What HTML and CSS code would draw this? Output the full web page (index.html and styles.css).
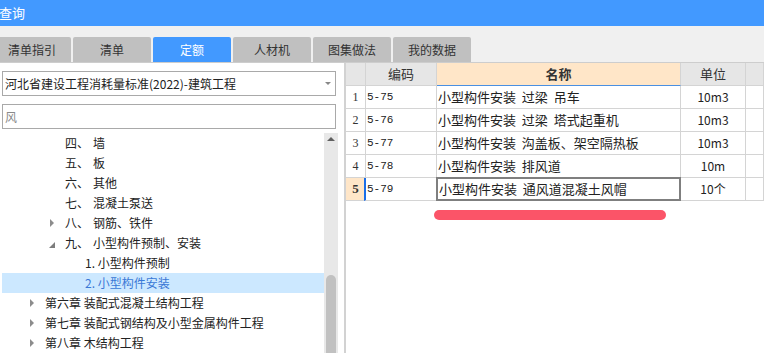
FILE: index.html
```html
<!DOCTYPE html>
<html lang="zh-CN">
<head>
    <meta charset="UTF-8">
    <meta name="viewport" content="width=device-width, initial-scale=1.0">
    <title>查询</title>
    <link rel="stylesheet" href="styles.css">
</head>
<body>
    <div class="window">
        <div class="titlebar"><span class="title">查询</span></div>

        <div class="tabs">
            <div class="tab">清单指引</div>
            <div class="tab">清单</div>
            <div class="tab active">定额</div>
            <div class="tab">人材机</div>
            <div class="tab">图集做法</div>
            <div class="tab">我的数据</div>
        </div>

        <div class="main">
            <div class="left">
                <div class="select">
                    <span>河北省建设工程消耗量标准(2022)-建筑工程</span>
                    <span class="caret"></span>
                </div>
                <div class="search">风</div>

                <div class="tree-wrap">
                    <ul class="tree">
                        <li class="node lv2"><span class="arrow"></span><span class="no">四、</span>墙</li>
                        <li class="node lv2"><span class="arrow"></span><span class="no">五、</span>板</li>
                        <li class="node lv2"><span class="arrow"></span><span class="no">六、</span>其他</li>
                        <li class="node lv2"><span class="arrow"></span><span class="no">七、</span>混凝土泵送</li>
                        <li class="node lv2"><span class="arrow closed"></span><span class="no">八、</span>钢筋、铁件</li>
                        <li class="node lv2"><span class="arrow open"></span><span class="no">九、</span>小型构件预制、安装</li>
                        <li class="node lv3"><span class="arrow"></span>1. 小型构件预制</li>
                        <li class="node lv3 selected"><span class="arrow"></span>2. 小型构件安装</li>
                        <li class="node lv1"><span class="arrow closed"></span>第六章 装配式混凝土结构工程</li>
                        <li class="node lv1"><span class="arrow closed"></span>第七章 装配式钢结构及小型金属构件工程</li>
                        <li class="node lv1"><span class="arrow closed"></span>第八章 木结构工程</li>
                    </ul>
                    <div class="scrollbar">
                        <span class="up"></span>
                        <div class="thumb"></div>
                    </div>
                </div>
            </div>

            <div class="right">
                <div class="grid">
                    <div class="cell head"></div>
                    <div class="cell head">编码</div>
                    <div class="cell head name-head">名称</div>
                    <div class="cell head">单位</div>
                    <div class="cell head"></div>

                    <div class="cell num">1</div>
                    <div class="cell code">5-75</div>
                    <div class="cell name">小型构件安装  过梁  吊车</div>
                    <div class="cell unit">10m3</div>
                    <div class="cell"></div>

                    <div class="cell num">2</div>
                    <div class="cell code">5-76</div>
                    <div class="cell name">小型构件安装  过梁  塔式起重机</div>
                    <div class="cell unit">10m3</div>
                    <div class="cell"></div>

                    <div class="cell num">3</div>
                    <div class="cell code">5-77</div>
                    <div class="cell name">小型构件安装  沟盖板、架空隔热板</div>
                    <div class="cell unit">10m3</div>
                    <div class="cell"></div>

                    <div class="cell num">4</div>
                    <div class="cell code">5-78</div>
                    <div class="cell name">小型构件安装  排风道</div>
                    <div class="cell unit">10m</div>
                    <div class="cell"></div>

                    <div class="cell num current">5</div>
                    <div class="cell code current-code">5-79</div>
                    <div class="cell name focus">小型构件安装  通风道混凝土风帽</div>
                    <div class="cell unit">10个</div>
                    <div class="cell"></div>
                </div>
                <div class="mark"></div>
            </div>
        </div>
    </div>
</body>
</html>
```

FILE: styles.css
```css
html, body {
    margin: 0;
    padding: 0;
    width: 764px;
    height: 353px;
    overflow: hidden;
    background: #fff;
    font-family: "Noto Sans CJK SC", "Noto Sans", sans-serif;
    color: #222;
}
.window {
    margin-left: -7px;
    width: 771px;
    height: 353px;
    display: flex;
    flex-direction: column;
}
.titlebar {
    height: 26px;
    background: #4299ff;
    color: #fff;
    font-size: 13px;
    line-height: 26px;
    padding-left: 6px;
}
.tabs {
    display: flex;
    gap: 2px;
    height: 25px;
    padding-top: 11px;
    background: #f0f0f0;
    border-bottom: 1px solid #cdcdcd;
}
.tab {
    width: 78px;
    height: 25px;
    line-height: 25px;
    text-align: center;
    font-size: 12px;
    color: #333;
    background: #c0c0c0;
    border-radius: 2px 2px 0 0;
}
.tab.active {
    background: #4299ff;
    color: #fff;
}
.main {
    flex: 1;
    display: flex;
    min-height: 0;
}
.left {
    width: 336px;
    padding: 8px 6px 0 9px;
    display: flex;
    flex-direction: column;
    border-right: 2px solid #d2d2d2;
}
.select, .search {
    width: 334px;
    height: 25px;
    box-sizing: border-box;
    border: 1px solid #a9a9a9;
    font-size: 12px;
    line-height: 23px;
    padding-left: 2px;
}
.select {
    display: flex;
    justify-content: space-between;
    align-items: center;
    margin-bottom: 8px;
}
.caret {
    width: 0;
    height: 0;
    margin-right: 4px;
    border-top: 3px solid #888;
    border-left: 3px solid transparent;
    border-right: 3px solid transparent;
}
.search {
    color: #8a8a8a;
}
.tree-wrap {
    flex: 1;
    display: flex;
    margin-top: 4px;
    min-height: 0;
    overflow: hidden;
}
.tree {
    flex: 1;
    list-style: none;
    margin: 0;
    padding: 0;
}
.node {
    height: 20px;
    line-height: 20px;
    font-size: 12px;
    display: flex;
    align-items: center;
    white-space: nowrap;
}
.node.lv1 { padding-left: 25px; }
.node.lv2 { padding-left: 45px; }
.node.lv3 { padding-left: 65px; }
.node.selected {
    background: #cce8ff;
    color: #3a78d6;
}
.arrow {
    width: 18px;
    height: 20px;
    display: flex;
    align-items: center;
}
.arrow.closed::before {
    content: "";
    margin-left: 3px;
    border-left: 4px solid #8c8c8c;
    border-top: 4px solid transparent;
    border-bottom: 4px solid transparent;
}
.arrow.open::before {
    content: "";
    margin-left: 2px;
    margin-top: 3px;
    border-bottom: 6px solid #7d7d7d;
    border-left: 6px solid transparent;
}
.no {
    margin-right: 4px;
}
.scrollbar {
    width: 14px;
    background: #e8e8e8;
    display: flex;
    flex-direction: column;
    align-items: center;
}
.up {
    margin-top: 4px;
    border-bottom: 4px solid #606060;
    border-left: 4px solid transparent;
    border-right: 4px solid transparent;
}
.thumb {
    width: 10px;
    flex: 1;
    margin-top: 134px;
    background: #c1c1c1;
    border-radius: 5px 5px 0 0;
}
.right {
    flex: 1;
    position: relative;
}
.grid {
    display: grid;
    grid-template-columns: 20px 71px 244px 65px 1fr;
    grid-auto-rows: 23px;
}
.cell {
    box-sizing: border-box;
    border-right: 1px solid #d4d4d4;
    border-bottom: 1px solid #d4d4d4;
    font-size: 13px;
    line-height: 22px;
    white-space: pre;
    overflow: hidden;
}
.head {
    background: #e6e6e6;
    text-align: center;
    color: #333;
}
.name-head {
    background: #ffe6c8;
    font-weight: bold;
    border-bottom: 1px solid #4a90e2;
}
.num {
    text-align: center;
    font-family: "Liberation Serif", serif;
    font-size: 12px;
    color: #333;
}
.num.current {
    background: #ffe6c8;
    font-weight: bold;
    font-size: 13px;
}
.code {
    font-family: "Liberation Mono", monospace;
    font-size: 11px;
    padding-left: 1px;
}
.current-code {
    border-left: 2px solid #1a6ee8;
    margin-left: -2px;
    padding-left: 1px;
}
.name {
    padding-left: 1px;
}
.focus {
    border: 2px solid #7f7f7f;
    margin: -1px 0 0 -1px;
    line-height: 20px;
}
.unit {
    text-align: center;
    font-size: 12px;
}
.mark {
    position: absolute;
    left: 88px;
    top: 147px;
    width: 232px;
    height: 10px;
    border-radius: 5px;
    background: #fb5468;
}
```
